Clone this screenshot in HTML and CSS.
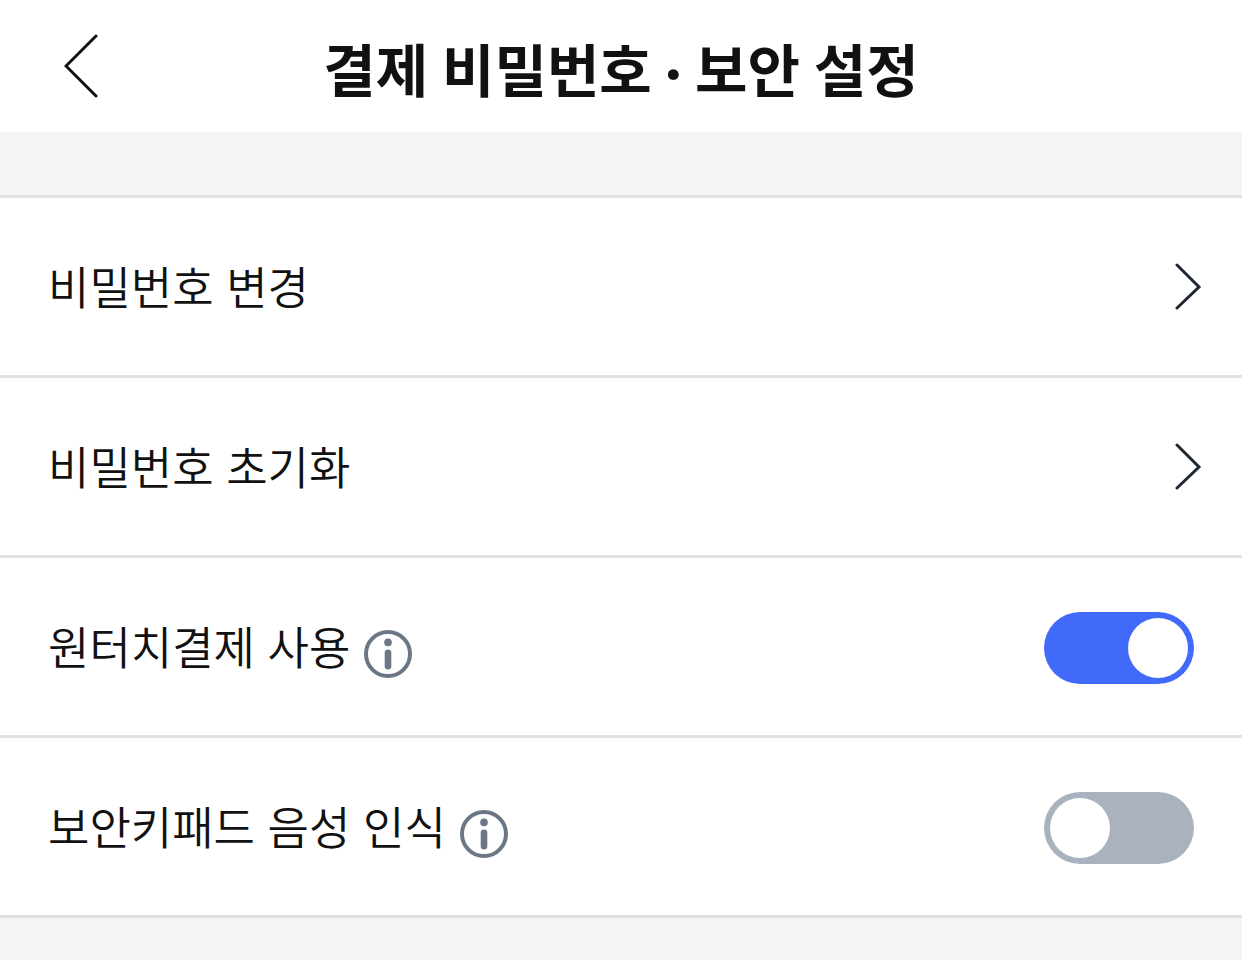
FILE: index.html
```html
<!DOCTYPE html>
<html lang="ko">
  <head>
    <meta charset="UTF-8" />
    <meta name="viewport" content="width=device-width, initial-scale=1.0" />
    <title>결제 비밀번호 · 보안 설정</title>
    <link rel="stylesheet" href="styles.css" />
  </head>
  <body>
    <header class="header">
      <button type="button" class="back" aria-label="뒤로">
        <svg width="36" height="66" viewBox="0 0 36 66" fill="none" stroke="#111" stroke-width="3" stroke-linecap="round">
          <path d="M32 3 2 33l30 30" />
        </svg>
      </button>
      <h1>결제 비밀번호 · 보안 설정</h1>
    </header>
    <main>
      <ul class="list">
        <li>
          <a class="row" href="#change">
            <span>비밀번호 변경</span>
            <svg class="arrow" width="28" height="48" viewBox="0 0 28 48" fill="none" stroke="#1e2732" stroke-width="3" stroke-linecap="round">
              <path d="M3 2l22 22L3 45" />
            </svg>
          </a>
        </li>
        <li>
          <a class="row" href="#reset">
            <span>비밀번호 초기화</span>
            <svg class="arrow" width="28" height="48" viewBox="0 0 28 48" fill="none" stroke="#1e2732" stroke-width="3" stroke-linecap="round">
              <path d="M3 2l22 22L3 45" />
            </svg>
          </a>
        </li>
        <li class="row">
          <label for="oneTouch">원터치결제 사용</label>
          <button type="button" class="info" aria-label="원터치결제 안내">
            <svg width="48" height="48" viewBox="0 0 48 48" fill="#6b7785">
              <circle cx="24" cy="24" r="22" fill="none" stroke="#6b7785" stroke-width="4" />
              <circle cx="24" cy="12.4" r="3.8" />
              <rect x="20.7" y="19.5" width="6.6" height="20" rx="3.3" />
            </svg>
          </button>
          <input type="checkbox" role="switch" class="switch" id="oneTouch" checked />
        </li>
        <li class="row">
          <label for="voice">보안키패드 음성 인식</label>
          <button type="button" class="info" aria-label="음성 인식 안내">
            <svg width="48" height="48" viewBox="0 0 48 48" fill="#6b7785">
              <circle cx="24" cy="24" r="22" fill="none" stroke="#6b7785" stroke-width="4" />
              <circle cx="24" cy="12.4" r="3.8" />
              <rect x="20.7" y="19.5" width="6.6" height="20" rx="3.3" />
            </svg>
          </button>
          <input type="checkbox" role="switch" class="switch" id="voice" />
        </li>
      </ul>
    </main>
  </body>
</html>
```

FILE: styles.css
```css
* {
  box-sizing: border-box;
}
body {
  margin: 0;
  background-color: #f4f4f4;
  color: #111;
  font-family: "Noto Sans CJK KR", sans-serif;
}
button {
  padding: 0;
  border: 0;
  background: none;
  cursor: pointer;
}
svg {
  display: block;
}
.header {
  display: grid;
  grid-template-columns: 100px 1fr 100px;
  align-items: center;
  height: 132px;
  background-color: #fff;
}
.back {
  justify-self: end;
}
h1 {
  margin: 0;
  padding-top: 8px;
  font-family: Lato, "Noto Sans CJK KR", sans-serif;
  font-size: 57px;
  line-height: 72px;
  font-weight: 700;
  text-align: center;
}
.list {
  margin: 63px 0 0;
  padding: 0;
  list-style: none;
  border-top: 3px solid #dfe1e5;
  background-color: #fff;
}
.list li {
  border-bottom: 3px solid #dfe1e5;
}
.row {
  display: flex;
  align-items: center;
  min-height: 177px;
  padding: 0 48px;
  color: #111;
  font-size: 45px;
  line-height: 60px;
  font-weight: 350;
  text-decoration: none;
}
li.row {
  min-height: 180px;
}
.row span,
.row label {
  padding-bottom: 2px;
}
.arrow {
  margin-left: auto;
  margin-right: -8px;
}
.info {
  margin: 14px 0 0 14px;
}
.switch {
  appearance: none;
  width: 150px;
  height: 72px;
  margin: 2px 0 0 auto;
  padding: 6px;
  border-radius: 36px;
  background-color: #abb2bf;
  cursor: pointer;
}
.switch::before {
  content: "";
  display: block;
  width: 60px;
  height: 60px;
  border-radius: 50%;
  background-color: #fff;
}
.switch:checked {
  background-color: #4169fa;
}
.switch:checked::before {
  margin-left: auto;
}
```
